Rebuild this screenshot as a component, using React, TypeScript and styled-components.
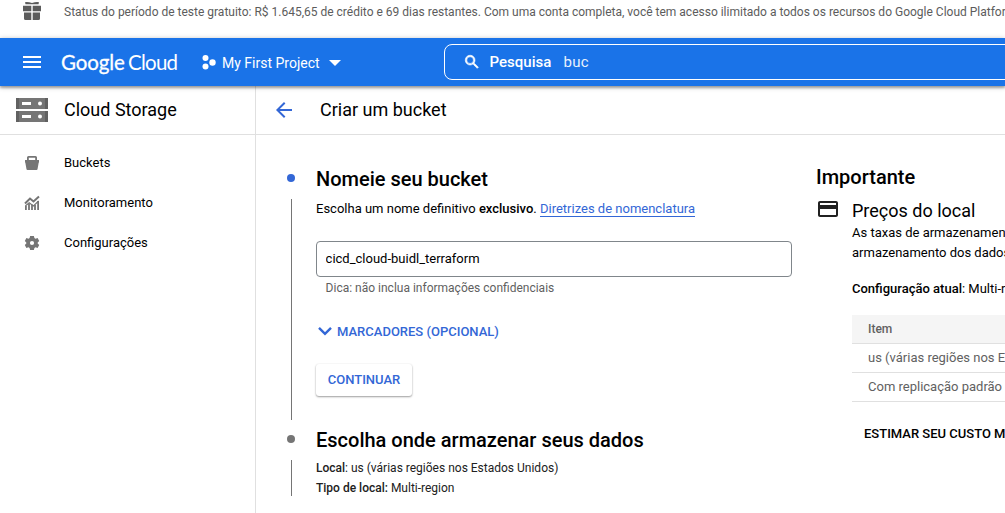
import React from "react";
import styled, { createGlobalStyle } from "styled-components";

const GlobalStyle = createGlobalStyle`
  *, *::before, *::after { box-sizing: border-box; }
  html, body { margin: 0; padding: 0; overflow: hidden; background: #fff; }
  body { font-family: Roboto, "Liberation Sans", sans-serif; font-size: 13px; color: #000; }
  h1, h2, h3, p { margin: 0; font-weight: 400; }
  b { font-weight: 500; }
  svg { display: block; flex: none; }
`;

const Page = styled.div`
  display: flex;
  flex-direction: column;
  width: 100vw;
  height: 100vh;
  overflow: hidden;
  white-space: nowrap;
`;

const TrialBanner = styled.div`
  display: flex;
  flex: none;
  height: 38px;
  padding: 2px 0 0 22px;
  gap: 22px;
  color: #5c5c5c;
  font-size: 12px;
  line-height: 20px;
`;

const TopBar = styled.header`
  display: flex;
  flex: none;
  align-items: center;
  height: 48px;
  padding-left: 20px;
  color: #fff;
  background: #1a73e8;
  box-shadow: 0 1px 5px rgba(0, 0, 0, 0.3), 0 2px 2px rgba(0, 0, 0, 0.24);
  z-index: 2;
`;

const Logo = styled.div`
  display: flex;
  width: 117px;
  margin-left: 17px;
  font-family: Lato, Roboto, sans-serif;
  font-size: 20.5px;
  line-height: 24px;
`;

const LogoWord = styled.span<{ $width: number; $tracking: number; $stroke: number }>`
  width: ${(p) => p.$width}px;
  letter-spacing: ${(p) => p.$tracking}px;
  -webkit-text-stroke: ${(p) => p.$stroke}px #fff;
`;

const ProjectPicker = styled.div`
  display: flex;
  align-items: center;
  margin-left: 23px;
  font-size: 14px;
  line-height: 20px;
`;

const ProjectName = styled.span`
  margin: 0 9px 0 6px;
  padding-top: 1px;
`;

const SearchBox = styled.div`
  display: flex;
  flex: none;
  align-items: center;
  width: 620px;
  height: 36px;
  margin-left: 103px;
  padding-left: 18px;
  border: 1px solid #fff;
  border-radius: 8px;
  font-size: 15px;
`;

const SearchLabel = styled.span`
  width: 74px;
  margin-left: 9px;
  font-weight: 500;
`;

const SearchQuery = styled.span`
  letter-spacing: 0.2px;
  opacity: 0.9;
`;

const Body = styled.div`
  display: flex;
  flex: 1;
  min-height: 0;
`;

const Sidebar = styled.nav`
  flex: none;
  width: 256px;
  border-right: 1px solid #e0e0e0;
`;

const TitleBar = styled.div<{ $indent: number; $gap: number }>`
  display: flex;
  align-items: center;
  height: 49px;
  padding-left: ${(p) => p.$indent}px;
  gap: ${(p) => p.$gap}px;
  border-bottom: 1px solid #e0e0e0;
`;

const Title = styled.h1`
  font-size: 18px;
  line-height: 24px;
`;

const NavList = styled.div`
  padding-top: 8px;
`;

const NavItem = styled.a`
  display: flex;
  align-items: center;
  height: 40px;
  padding-left: 23px;
  gap: 23px;
  color: #000;
  line-height: 20px;
  svg { color: #757575; }
`;

const Main = styled.main`
  flex: 1;
  min-width: 0;
  overflow: hidden;
`;

const Columns = styled.div`
  display: flex;
  padding: 30px 0 0 30px;
`;

const Steps = styled.div`
  flex: none;
  width: 530px;
`;

const Step = styled.section<{ $height: number }>`
  display: flex;
  height: ${(p) => p.$height}px;
`;

const Rail = styled.div`
  display: flex;
  flex-direction: column;
  align-items: center;
  width: 10px;
  margin-right: 20px;
  padding-top: 9px;
`;

const Dot = styled.i<{ $active?: boolean }>`
  width: 8px;
  height: 8px;
  border-radius: 50%;
  background: ${(p) => (p.$active ? "#3367d6" : "#757575")};
`;

const RailLine = styled.i<{ $height: number }>`
  width: 1px;
  height: ${(p) => p.$height}px;
  margin: 17px 0 0 1px;
  background: #757575;
`;

const StepBody = styled.div`
  width: 476px;
`;

const Heading = styled.h2`
  font-size: 20px;
  font-weight: 500;
  line-height: 28px;
`;

const Intro = styled.p`
  padding-top: 6px;
  line-height: 20px;
`;

const Link = styled.a`
  color: #3367d6;
  border-bottom: 1px solid #3367d6;
`;

const NameInput = styled.input`
  display: block;
  width: 476px;
  height: 36px;
  margin-top: 22px;
  padding: 0 9px 1px 8.6px;
  border: 1px solid #80868b;
  border-radius: 4px;
  outline: none;
  color: #000;
  background: #fff;
  font: 13px Roboto, sans-serif;
`;

const Hint = styled.p`
  padding: 2px 0 0 9.6px;
  color: #5f5f5f;
  font-size: 12px;
  line-height: 18px;
`;

const Expander = styled.div`
  display: flex;
  align-items: center;
  margin-top: 25px;
  padding-left: 2px;
  gap: 5px;
  color: #3367d6;
  font-weight: 500;
  line-height: 20px;
`;

const ContinueButton = styled.button`
  display: block;
  width: 96px;
  height: 32px;
  margin-top: 22px;
  padding: 0 0 1px;
  border: 0;
  border-radius: 3px;
  color: #3367d6;
  background: #fff;
  box-shadow: 0 1px 2px rgba(0, 0, 0, 0.38), 0 0 2px rgba(0, 0, 0, 0.06);
  font: 500 13px Roboto, sans-serif;
`;

const Summary = styled.div`
  padding-top: 4px;
  color: #212121;
  font-size: 12px;
  line-height: 20px;
`;

const Aside = styled.aside`
  flex: none;
  width: 480px;
`;

const AsideHeading = styled(Heading)`
  line-height: 24px;
`;

const PriceSection = styled.div`
  display: flex;
  gap: 12px;
  padding-top: 8px;
`;

const PriceBody = styled.div`
  flex: 1;
  padding-top: 2px;
  line-height: 20px;
`;

const PriceTitle = styled.h3`
  font-size: 18px;
  line-height: 24px;
`;

const CurrentSetup = styled.p`
  margin-top: 16px;
`;

const PriceRow = styled.div<{ $head?: boolean }>`
  height: 29px;
  padding-left: 16px;
  border-bottom: 1px solid #e0e0e0;
  color: #616161;
  background: ${(p) => (p.$head ? "#f5f5f5" : "#fff")};
  font-size: ${(p) => (p.$head ? 12 : 13)}px;
  font-weight: ${(p) => (p.$head ? 500 : 400)};
  line-height: 28px;
`;

const PriceTable = styled.div`
  margin-top: 16px;
`;

const EstimateLink = styled.div`
  margin: 22px 0 0 12px;
  font-weight: 500;
`;

const GiftIcon = () => (
  <svg width="20" height="20" viewBox="0 0 20 20" fill="#5c5c5c">
    <path d="M3 .2q3-.6 7 .9 4-1.500 7-.9L16.500 2.200H3.500zM1 3.700h8.300v5.600H1zM10.700 3.700H19v5.600h-8.300zM2 10.500h7.300V18H3.500A1.500 1.500 0 0 1 2 16.500zM10.700 10.500H18v6a1.500 1.500 0 0 1-1.500 1.500h-5.800z" />
  </svg>
);

const MenuIcon = () => (
  <svg width="24" height="24" viewBox="0 0 24 24" fill="#fff">
    <path d="M3 18h18v-2H3zm0-5h18v-2H3zm0-7v2h18V6z" />
  </svg>
);

const ProjectIcon = () => (
  <svg width="15" height="16" viewBox="0 0 15 16" fill="#fff">
    <circle cx="4.500" cy="4" r="3" />
    <circle cx="4.500" cy="12.500" r="3" />
    <circle cx="11.500" cy="8.500" r="3.200" />
  </svg>
);

const CaretIcon = () => (
  <svg width="12" height="8" viewBox="0 0 12 8" fill="#fff">
    <path d="M0 2h12L6 8z" />
  </svg>
);

const SearchIcon = () => (
  <svg width="18" height="18" viewBox="0 0 24 24" fill="#fff" stroke="#fff" strokeWidth="0.8">
    <path d="M15.500 14h-.79l-.28-.27A6.470 6.470 0 0 0 16 9.500 6.500 6.500 0 1 0 9.500 16c1.610 0 3.090-.59 4.230-1.570l.27.28v.79l5 4.990L20.490 19zm-6 0a4.500 4.500 0 1 1 0-9 4.500 4.500 0 0 1 0 9z" />
  </svg>
);

const StorageIcon = () => (
  <svg width="32" height="24" viewBox="0 0 32 24">
    <path fill="#757575" d="M0 0h32v11H0zM0 13h32v11H0z" />
    <path fill="#616161" d="M0 0h3v11H0zM29 0h3v11h-3zM0 13h3v11H0zM29 13h3v11h-3z" />
    <path fill="#fff" d="M6 4h9v3H6zM6 17h9v3H6z" />
    <circle cx="24" cy="5.500" r="2" fill="#fff" />
    <circle cx="24" cy="18.500" r="2" fill="#fff" />
  </svg>
);

const BucketIcon = () => (
  <svg width="18" height="18" viewBox="0 0 18 18" fill="currentColor" fillRule="evenodd">
    <path d="M2 6h2V3.500A1.500 1.500 0 0 1 5.500 2h7A1.500 1.500 0 0 1 14 3.500V6h2v2.500h-.3L14.500 15.200a1 1 0 0 1-1 .8H4.500a1 1 0 0 1-1-.8L2.300 8.500H2zM5.800 3.700V6h6.400V3.700z" />
  </svg>
);

const MonitoringIcon = () => (
  <svg width="18" height="18" viewBox="0 0 18 18" fill="none" stroke="currentColor">
    <path strokeWidth="2" d="M2 9.500l5-5 3.500 3L16 2.500" />
    <path strokeWidth="1.800" d="M2.900 12v4M6 9.500V16M9 10.500V16M12 11v5M15.100 7v9" />
    <path strokeWidth="1.100" d="M2.300 12L6.200 8.800l4.200 3.200L15.600 7" />
  </svg>
);

const GearIcon = () => (
  <svg width="18" height="18" viewBox="0 0 18 18" fill="currentColor" fillRule="evenodd">
    <path d="M7.100 2h3.800l.5 2.100 1.100.6 2.100-.6L16.200 7l-1.500 1.500v1l1.500 1.500-1.600 2.900-2.100-.6-1.100.6-.5 2.100H7.100l-.5-2.100-1.100-.6-2.100.6L1.800 11l1.500-1.500v-1L1.800 7l1.600-2.900 2.100.6 1.100-.6zM9 6.900a2.100 2.100 0 1 0 0 4.200 2.100 2.100 0 0 0 0-4.200z" />
  </svg>
);

const BackIcon = () => (
  <svg width="24" height="24" viewBox="0 0 24 24" fill="#3367d6">
    <path d="M20 11H7.830l5.590-5.590L12 4l-8 8 8 8 1.410-1.410L7.830 13H20z" />
  </svg>
);

const ChevronIcon = () => (
  <svg width="14" height="10" viewBox="0 0 14 10" fill="none" stroke="#3367d6" strokeWidth="2.400">
    <path d="M1 .9l6 6 6-6" />
  </svg>
);

const CardIcon = () => (
  <svg width="24" height="24" viewBox="0 0 24 24" fill="#212121">
    <path d="M20 4H4c-1.110 0-1.990.89-1.990 2L2 18c0 1.110.89 2 2 2h16c1.110 0 2-.89 2-2V6c0-1.110-.89-2-2-2zm0 14H4v-6h16zm0-10H4V6h16z" />
  </svg>
);

export default function App() {
  return (
    <Page>
      <GlobalStyle />
      <TrialBanner>
        <GiftIcon />
        <span>
          Status do período de teste gratuito: R$ 1.645,65 de crédito e 69 dias restantes. Com uma conta completa, você
          tem acesso ilimitado a todos os recursos do Google Cloud Platform.
        </span>
      </TrialBanner>
      <TopBar>
        <MenuIcon />
        <Logo>
          <LogoWord $width={67} $tracking={-0.1} $stroke={0.3}>Google</LogoWord>
          <LogoWord $width={50} $tracking={-0.75} $stroke={0}>Cloud</LogoWord>
        </Logo>
        <ProjectPicker>
          <ProjectIcon />
          <ProjectName>My First Project</ProjectName>
          <CaretIcon />
        </ProjectPicker>
        <SearchBox>
          <SearchIcon />
          <SearchLabel>Pesquisa</SearchLabel>
          <SearchQuery>buc</SearchQuery>
        </SearchBox>
      </TopBar>
      <Body>
        <Sidebar>
          <TitleBar $indent={16} $gap={16}>
            <StorageIcon />
            <Title>Cloud Storage</Title>
          </TitleBar>
          <NavList>
            <NavItem><BucketIcon /><span>Buckets</span></NavItem>
            <NavItem><MonitoringIcon /><span>Monitoramento</span></NavItem>
            <NavItem><GearIcon /><span>Configurações</span></NavItem>
          </NavList>
        </Sidebar>
        <Main>
          <TitleBar $indent={16} $gap={24}>
            <BackIcon />
            <Title>Criar um bucket</Title>
          </TitleBar>
          <Columns>
            <Steps>
              <Step $height={261}>
                <Rail>
                  <Dot $active />
                  <RailLine $height={221} />
                </Rail>
                <StepBody>
                  <Heading>Nomeie seu bucket</Heading>
                  <Intro>
                    Escolha um nome definitivo <b>exclusivo</b>. <Link>Diretrizes de nomenclatura</Link>
                  </Intro>
                  <NameInput defaultValue="cicd_cloud-buidl_terraform" />
                  <Hint>Dica: não inclua informações confidenciais</Hint>
                  <Expander>
                    <ChevronIcon />
                    MARCADORES (OPCIONAL)
                  </Expander>
                  <ContinueButton>CONTINUAR</ContinueButton>
                </StepBody>
              </Step>
              <Step $height={80}>
                <Rail>
                  <Dot />
                  <RailLine $height={36} />
                </Rail>
                <StepBody>
                  <Heading>Escolha onde armazenar seus dados</Heading>
                  <Summary>
                    <p><b>Local</b>: us (várias regiões nos Estados Unidos)</p>
                    <p><b>Tipo de local:</b> Multi-region</p>
                  </Summary>
                </StepBody>
              </Step>
            </Steps>
            <Aside>
              <AsideHeading>Importante</AsideHeading>
              <PriceSection>
                <CardIcon />
                <PriceBody>
                  <PriceTitle>Preços do local</PriceTitle>
                  <p>As taxas de armazenamento variam de acordo com a classe de</p>
                  <p>armazenamento dos dados e o local do bucket.</p>
                  <CurrentSetup><b>Configuração atual</b>: Multi-region</CurrentSetup>
                  <PriceTable>
                    <PriceRow $head>Item</PriceRow>
                    <PriceRow>us (várias regiões nos Estados Unidos)</PriceRow>
                    <PriceRow>Com replicação padrão</PriceRow>
                  </PriceTable>
                  <EstimateLink>ESTIMAR SEU CUSTO MENSAL</EstimateLink>
                </PriceBody>
              </PriceSection>
            </Aside>
          </Columns>
        </Main>
      </Body>
    </Page>
  );
}
